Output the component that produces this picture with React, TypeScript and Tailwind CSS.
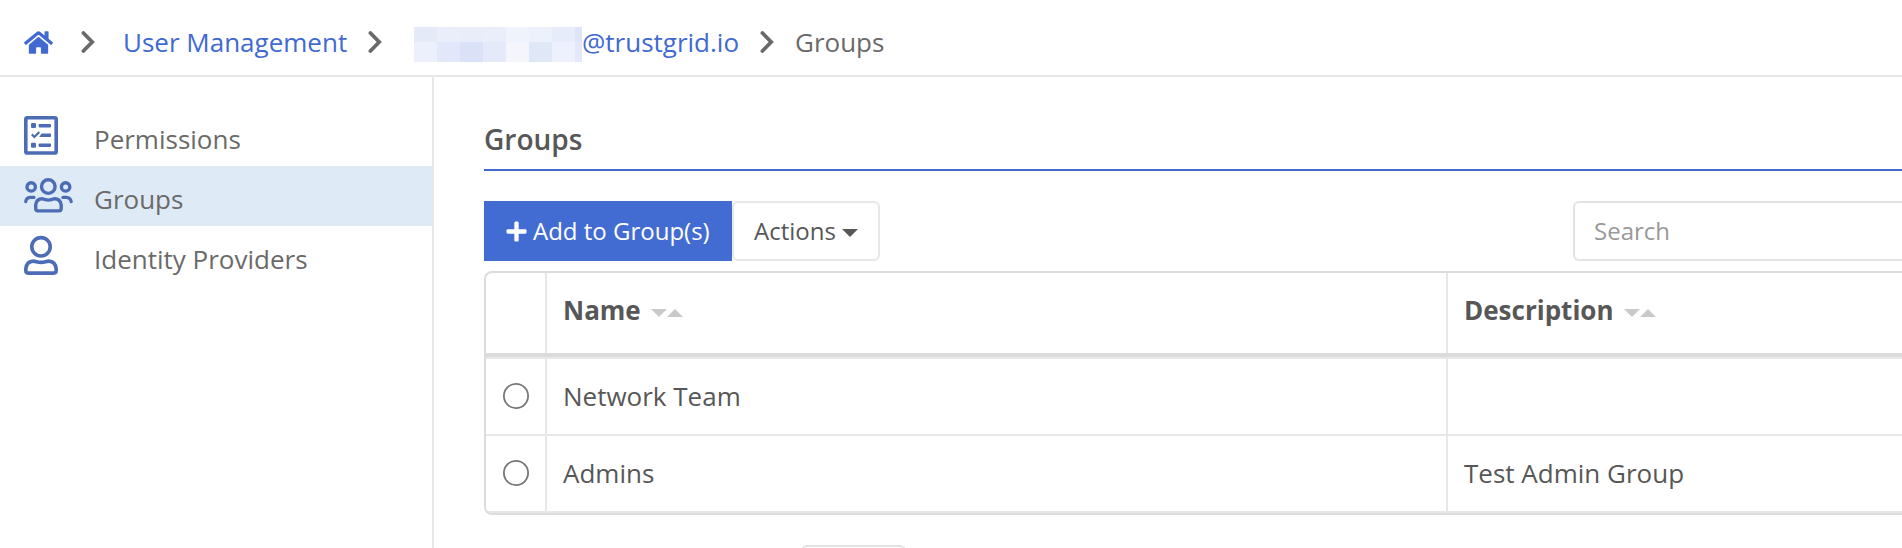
import { FaHome, FaPlus } from "react-icons/fa";

const BLUR_TOP = ["bg-[#e4eaf8]", "bg-[#e9eefa]", "bg-[#e8edf9]", "bg-[#e9eefa]", "bg-[#eff3fc]", "bg-[#ecf1fc]", "bg-[#e6ecf9]", "bg-[#dfe5f8]"];
const BLUR_BOTTOM = ["bg-[#ebf0fc]", "bg-[#e2e8f9]", "bg-[#dbe1f6]", "bg-[#e5eafa]", "bg-[#f4f6fc]", "bg-[#e0e7f6]", "bg-[#edf1fd]", "bg-[#e3e8fa]"];

function Chevron({ className }: { className: string }) {
  return (
    <svg viewBox="0 0 14 22" className={`h-[22px] w-[14px] shrink-0 ${className}`}>
      <path d="M2.4 2 L11.2 11 L2.4 20" fill="none" stroke="#6a6a6a" strokeWidth="3.8" strokeLinecap="round" />
    </svg>
  );
}

function Redacted() {
  return (
    <span className="mt-[27px] grid h-[35px] w-[168px] shrink-0 grid-cols-[23px_23px_23px_23px_23px_23px_23px_7px] grid-rows-[15px_20px]">
      {[...BLUR_TOP, ...BLUR_BOTTOM].map((c, i) => (
        <span key={i} className={c} />
      ))}
    </span>
  );
}

function PermissionsIcon() {
  return (
    <svg viewBox="0 0 50 60" className="h-[60px] w-[50px]" fill="#4c6db5">
      <rect x="1.8" y="11.8" width="30.4" height="35.2" rx="1.6" fill="none" stroke="#4c6db5" strokeWidth="3.6" />
      <rect x="7" y="17" width="5" height="5" rx="1" />
      <rect x="14.6" y="17.9" width="12.4" height="3.5" rx="0.8" />
      <path d="M7.8 28.4 L10.4 31 L15.3 26" fill="none" stroke="#4c6db5" strokeWidth="2.2" />
      <path d="M17.6 27.4 H26.3 Q27 27.4 27 28.1 V30.2 Q27 30.9 26.3 30.9 H15.2 Z" />
      <rect x="7" y="36.7" width="5" height="5" rx="1" />
      <rect x="14.6" y="37.4" width="12.4" height="3.5" rx="0.8" />
    </svg>
  );
}

function GroupsIcon() {
  return (
    <svg viewBox="0 0 50 60" className="h-[60px] w-[50px]" fill="none" stroke="#4c6db5" strokeWidth="3.4">
      <circle cx="24.3" cy="20.6" r="6.8" />
      <circle cx="7.2" cy="20.9" r="4.2" />
      <circle cx="41.6" cy="20.9" r="4.2" />
      <path d="M11.7 42.2 V39 Q12.3 32.8 18.3 32.8 Q24.3 35.4 30.3 32.8 Q36.6 33 37.2 39 V42.2 Q37.2 44.9 34.9 44.9 H14 Q11.7 44.9 11.7 42.2 Z" />
      <path d="M1.7 35.7 Q2.2 31.4 6.8 31.4 H10 M38.9 31.4 H42.1 Q46.5 31.6 47.2 35.7" strokeLinecap="round" strokeWidth="3.2" />
    </svg>
  );
}

function UserIcon() {
  return (
    <svg viewBox="0 0 50 60" className="h-[60px] w-[50px]" fill="none" stroke="#4c6db5" strokeWidth="3.6">
      <circle cx="17" cy="20.8" r="9.2" />
      <path d="M1.8 44.5 V43 Q2.6 35.2 9.3 35.1 C12 35.1 13.2 36.4 17 36.4 C20.8 36.4 22 35.1 24.7 35.1 Q31.4 35.2 32.2 43 V44.5 Q32.2 47.1 29.8 47.1 H4.2 Q1.8 47.1 1.8 44.5 Z" />
    </svg>
  );
}

function Sort() {
  return (
    <svg viewBox="0 0 32 8" className="ml-[10px] mt-1 h-2 w-8" fill="#c9c9c9">
      <path d="M0 0H16L8 8Z M16 8L24 0L32 8Z" />
    </svg>
  );
}

const NAV = [
  { label: "Permissions", Icon: PermissionsIcon, row: "" },
  { label: "Groups", Icon: GroupsIcon, row: "bg-[#deebf6]" },
  { label: "Identity Providers", Icon: UserIcon, row: "" },
];

const ROWS = [
  { name: "Network Team", description: "" },
  { name: "Admins", description: "Test Admin Group" },
];

export default function App() {
  return (
    <div className="flex h-[548px] w-[1902px] flex-col overflow-hidden bg-white font-['Open_Sans',sans-serif] text-[26px] text-[#575757]">
      <header className="flex h-[77px] shrink-0 border-b-2 border-[#e7e8e9] pl-6 leading-[84px] whitespace-nowrap text-[#4169d1]">
        <FaHome className="mt-[28px] size-[29px] shrink-0" />
        <Chevron className="mt-[31px] ml-[28px]" />
        <a className="ml-[28px] w-[226px]">User Management</a>
        <Chevron className="mt-[31px] ml-[19px]" />
        <span className="w-[32px] shrink-0" />
        <Redacted />
        <a className="w-[158px]">@trustgrid.io</a>
        <Chevron className="mt-[31px] ml-[20px]" />
        <span className="ml-[21px] text-[#6a6a6a]">Groups</span>
      </header>
      <div className="flex min-h-0 flex-1">
        <nav className="w-[434px] shrink-0 border-r-2 border-[#e7e8e9] pt-[29px]">
          {NAV.map(({ label, Icon, row }) => (
            <a key={label} className={`flex h-[60px] pl-6 ${row}`}>
              <Icon />
              <span className="ml-5 leading-[66px] text-[#6a6a6a]">{label}</span>
            </a>
          ))}
        </nav>
        <main className="flex w-[1468px] shrink-0 flex-col pl-[50px]">
          <h1 className="h-[94px] shrink-0 border-b-2 border-[#4169d1] pt-[39px] text-[28px] leading-[46px] font-semibold">Groups</h1>
          <div className="mt-[30px] flex h-[60px] shrink-0 leading-[60px]">
            <button className="flex w-[248px] items-center bg-[#436cd2] pl-[21px] whitespace-nowrap text-white">
              <FaPlus className="mr-[5px] size-[23px] shrink-0" />
              <span className="text-2xl leading-[58px]">Add to Group(s)</span>
            </button>
            <button className="flex w-[148px] items-center rounded-md border-2 border-[#e7e7e7] pl-[20px]">
              <span className="text-2xl leading-[58px]">Actions</span>
              <svg viewBox="0 0 16 8" className="mt-[3px] ml-[6px] h-2 w-4 shrink-0" fill="#575757">
                <path d="M0 0H16L8 8Z" />
              </svg>
            </button>
            <div className="ml-auto flex w-[329px] items-center rounded-l-md border-2 border-r-0 border-[#e3e3e3] pl-[19px] text-2xl text-[#999]">
              Search
            </div>
          </div>
          <div className="mt-[10px] shrink-0 overflow-hidden rounded-l-lg border-2 border-r-0 border-[#dcdcdc]">
            <div className="grid h-[84px] grid-cols-[61px_901px_1fr] border-b-4 border-[#dcdcdc] font-bold">
              <div className="border-r-2 border-[#e7e7e7]" />
              <div className="flex items-center border-r-2 border-[#e7e7e7] pb-[5px] pl-4">
                Name
                <Sort />
              </div>
              <div className="flex items-center pb-[5px] pl-4">
                Description
                <Sort />
              </div>
            </div>
            <div className="h-[2px] bg-[#e7e7e7]" />
            {ROWS.map((r) => (
              <div key={r.name} className="grid h-[77px] grid-cols-[61px_901px_1fr] border-b-2 border-[#e7e7e7] leading-[74px]">
                <div className="flex items-center border-r-2 border-[#e7e7e7] pl-[17px]">
                  <svg viewBox="0 0 26 26" className="mb-px size-[26px]">
                    <circle cx="13" cy="13" r="12.1" fill="#fff" stroke="#767676" strokeWidth="1.8" />
                  </svg>
                </div>
                <div className="border-r-2 border-[#e7e7e7] pl-4">{r.name}</div>
                <div className="pl-4">{r.description}</div>
              </div>
            ))}
          </div>
          <div className="mt-[30px] ml-[317px] h-[60px] w-[105px] shrink-0 rounded-md border-2 border-[#e3e3e3]" />
        </main>
      </div>
    </div>
  );
}
